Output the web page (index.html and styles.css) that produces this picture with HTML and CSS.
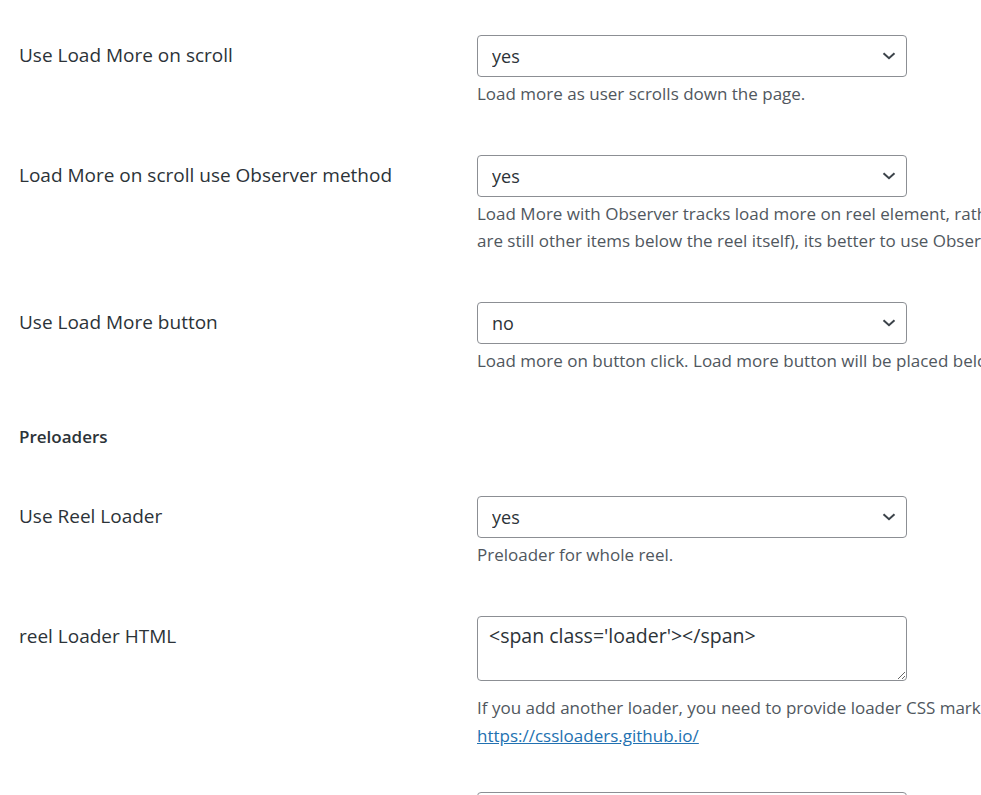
FILE: index.html
```html
<!DOCTYPE html>
<html lang="en">
  <head>
    <meta charset="UTF-8" />
    <meta name="viewport" content="width=device-width, initial-scale=1.0" />
    <title>Reel Settings</title>
    <link rel="stylesheet" href="styles.css">
  </head>
  <body>
    <div class="settings">

      <div class="form-row">
        <label class="form-label" for="scroll">Use Load More on scroll</label>
        <div class="form-field">
          <div class="select-wrap">
            <select id="scroll" class="select"><option>yes</option><option>no</option></select>
            <svg class="chevron" width="14" height="8" viewBox="0 0 14 8"><path d="M1.5 1.2 7 6.2l5.5-5" fill="none" stroke="#3c434a" stroke-width="2"/></svg>
          </div>
          <p class="description">Load more as user scrolls down the page.</p>
        </div>
      </div>

      <div class="form-row">
        <label class="form-label" for="observer">Load More on scroll use Observer method</label>
        <div class="form-field">
          <div class="select-wrap">
            <select id="observer" class="select"><option>yes</option><option>no</option></select>
            <svg class="chevron" width="14" height="8" viewBox="0 0 14 8"><path d="M1.5 1.2 7 6.2l5.5-5" fill="none" stroke="#3c434a" stroke-width="2"/></svg>
          </div>
          <p class="description">Load More with Observer tracks load more on reel element, rather than page scroll. If reel is not the last element on the page (there<br>are still other items below the reel itself), its better to use Observer method.</p>
        </div>
      </div>

      <div class="form-row">
        <label class="form-label" for="button">Use Load More button</label>
        <div class="form-field">
          <div class="select-wrap">
            <select id="button" class="select"><option>no</option><option>yes</option></select>
            <svg class="chevron" width="14" height="8" viewBox="0 0 14 8"><path d="M1.5 1.2 7 6.2l5.5-5" fill="none" stroke="#3c434a" stroke-width="2"/></svg>
          </div>
          <p class="description">Load more on button click. Load more button will be placed below the reel.</p>
        </div>
      </div>

      <h2 class="section-title">Preloaders</h2>

      <div class="form-row">
        <label class="form-label" for="reel-loader">Use Reel Loader</label>
        <div class="form-field">
          <div class="select-wrap">
            <select id="reel-loader" class="select"><option>yes</option><option>no</option></select>
            <svg class="chevron" width="14" height="8" viewBox="0 0 14 8"><path d="M1.5 1.2 7 6.2l5.5-5" fill="none" stroke="#3c434a" stroke-width="2"/></svg>
          </div>
          <p class="description">Preloader for whole reel.</p>
        </div>
      </div>

      <div class="form-row form-row-textarea">
        <label class="form-label" for="loader-html">reel Loader HTML</label>
        <div class="form-field">
          <textarea id="loader-html" class="textarea"><span class='loader'></span></textarea>
          <p class="description description-loose">If you add another loader, you need to provide loader CSS markup as well. You can find loaders here:<br><a href="#">https://cssloaders.github.io/</a></p>
        </div>
      </div>

      <div class="form-row">
        <label class="form-label" for="item-loader">Use Item Loader</label>
        <div class="form-field">
          <div class="select-wrap">
            <select id="item-loader" class="select"><option>yes</option><option>no</option></select>
            <svg class="chevron" width="14" height="8" viewBox="0 0 14 8"><path d="M1.5 1.2 7 6.2l5.5-5" fill="none" stroke="#3c434a" stroke-width="2"/></svg>
          </div>
          <p class="description">Preloader for each item.</p>
        </div>
      </div>

    </div>
  </body>
</html>
```

FILE: styles.css
```css
html, body {
  margin: 0;
  overflow: hidden;
  background: #ffffff;
  font-family: "Open Sans", "Noto Sans", sans-serif;
  color: #2c3338;
}

.settings {
  padding: 11px 0 0 19px;
}

.form-row {
  display: flex;
  align-items: flex-start;
  padding: 24px 0;
}

.form-row-textarea {
  padding-bottom: 18px;
}

.form-label {
  flex: 0 0 458px;
  padding-top: 7px;
  font-size: 19px;
  line-height: 27px;
  color: #2c3338;
}

.form-field {
  flex: 1;
  min-width: 0;
}

.select-wrap {
  position: relative;
  width: 430px;
}

.select {
  -webkit-appearance: none;
  appearance: none;
  width: 430px;
  height: 42px;
  padding: 0 40px 0 14px;
  border: 1px solid #8c8f94;
  border-radius: 4px;
  background: #fff;
  font-family: inherit;
  font-size: 18px;
  color: #2c3338;
}

.chevron {
  position: absolute;
  right: 11px;
  top: 17px;
  pointer-events: none;
}

.textarea {
  display: block;
  box-sizing: border-box;
  width: 430px;
  height: 65px;
  padding: 5px 11px;
  border: 1px solid #8c8f94;
  border-radius: 4px;
  font-family: inherit;
  font-size: 19.5px;
  line-height: 27px;
  color: #2c3338;
  resize: vertical;
}

.description {
  margin: 3px 0 0;
  font-size: 17px;
  line-height: 27px;
  color: #50575e;
  white-space: nowrap;
}

.description-loose {
  margin-top: 13px;
  line-height: 28px;
}

.description a {
  color: #2271b1;
}

.section-title {
  margin: 25px 0 22px;
  font-size: 17px;
  font-weight: 600;
  line-height: 27px;
  color: #2c3338;
}
```
